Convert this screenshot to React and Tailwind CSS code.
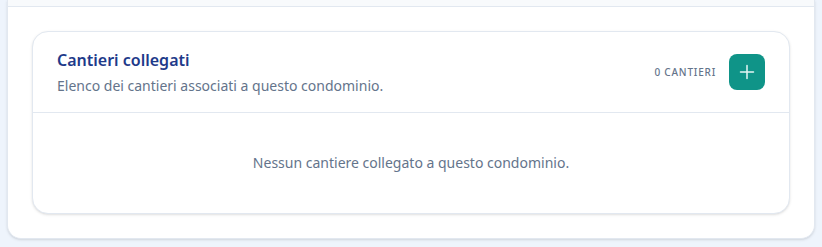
import React from "react";

export default function App() {
  return (
    <div
      className="w-[822px] h-[247px] bg-[#eef4fc] px-[7px] pb-[8px] overflow-hidden"
      style={{ fontFamily: '"Noto Sans", "Open Sans", sans-serif' }}
    >
      <div className="h-full bg-white border border-t-0 border-[#e2e8f0] rounded-b-[14px] shadow-sm flex flex-col">
        <div className="h-[8px] bg-[#f8fafc] border-b border-[#e2e8f0]"></div>
        <div className="flex-1 px-[24px] pt-[24px] pb-[24px]">
          <div className="border border-[#e2e8f0] rounded-[16px] bg-white shadow-sm">
            <div className="flex items-center justify-between px-[24px] py-[16px] border-b border-[#e2e8f0]">
              <div className="flex flex-col gap-[4px]">
                <h2 className="text-[16px] leading-[24px] font-semibold text-[#1e3a8a]">
                  Cantieri collegati
                </h2>
                <p className="text-[14px] leading-[20px] text-[#64748b]">
                  Elenco dei cantieri associati a questo condominio.
                </p>
              </div>
              <div className="flex items-center gap-[13px]">
                <span className="text-[10px] tracking-[0.08em] uppercase text-[#64748b] font-medium">
                  0 cantieri
                </span>
                <button className="w-[36px] h-[36px] rounded-[8px] bg-[#0f9488] flex items-center justify-center">
                  <svg width="16" height="16" viewBox="0 0 16 16" fill="none">
                    <path d="M8 1.5v13M1.5 8h13" stroke="#e6f5f3" strokeWidth="1.5" strokeLinecap="round" />
                  </svg>
                </button>
              </div>
            </div>
            <div className="py-[40px] text-center text-[14px] leading-[20px] text-[#64748b]">
              Nessun cantiere collegato a questo condominio.
            </div>
          </div>
        </div>
      </div>
    </div>
  );
}
